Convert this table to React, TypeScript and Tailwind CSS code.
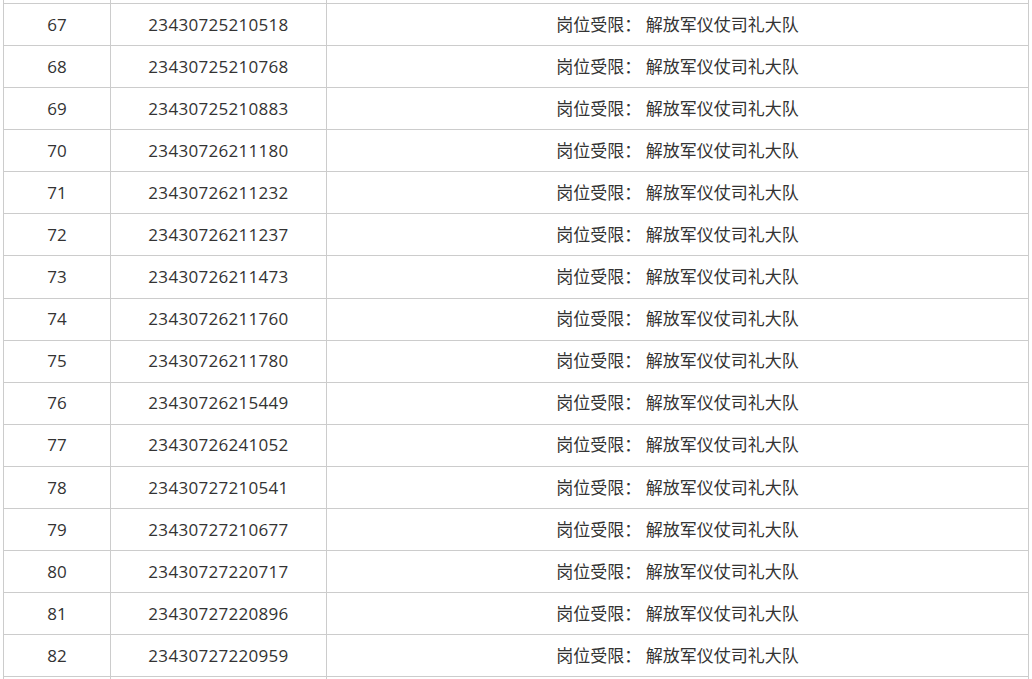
const rows: [number, string][] = [
  [67, "23430725210518"],
  [68, "23430725210768"],
  [69, "23430725210883"],
  [70, "23430726211180"],
  [71, "23430726211232"],
  [72, "23430726211237"],
  [73, "23430726211473"],
  [74, "23430726211760"],
  [75, "23430726211780"],
  [76, "23430726215449"],
  [77, "23430726241052"],
  [78, "23430727210541"],
  [79, "23430727210677"],
  [80, "23430727220717"],
  [81, "23430727220896"],
  [82, "23430727220959"],
];

const cell = "border border-[#cccccc] p-0 text-center";

export default function App() {
  return (
    <div className="h-[679px] w-[1032px] overflow-hidden bg-white">
      <div className="-mt-[39px] pl-[3px]">
        <table
          className="w-[1026px] table-fixed border-collapse text-[17px] text-[#333]"
          style={{ fontFamily: '"Open Sans", "Noto Sans CJK SC", sans-serif' }}
        >
          <colgroup>
            <col className="w-[107px]" />
            <col className="w-[216px]" />
            <col />
          </colgroup>
          <tbody>
            {/* previous row, scrolled mostly out of view */}
            <tr className="h-[42.07px]">
              <td className={cell} />
              <td className={cell} />
              <td className={cell} />
            </tr>
            {rows.map(([n, id]) => (
              <tr key={n} className="h-[42.07px]">
                <td className={cell}>{n}</td>
                <td className={`${cell} tracking-[0.3px]`}>{id}</td>
                <td className={cell}>岗位受限： 解放军仪仗司礼大队</td>
              </tr>
            ))}
            <tr className="h-[42.07px]">
              <td className={cell} />
              <td className={cell} />
              <td className={cell} />
            </tr>
          </tbody>
        </table>
      </div>
    </div>
  );
}
